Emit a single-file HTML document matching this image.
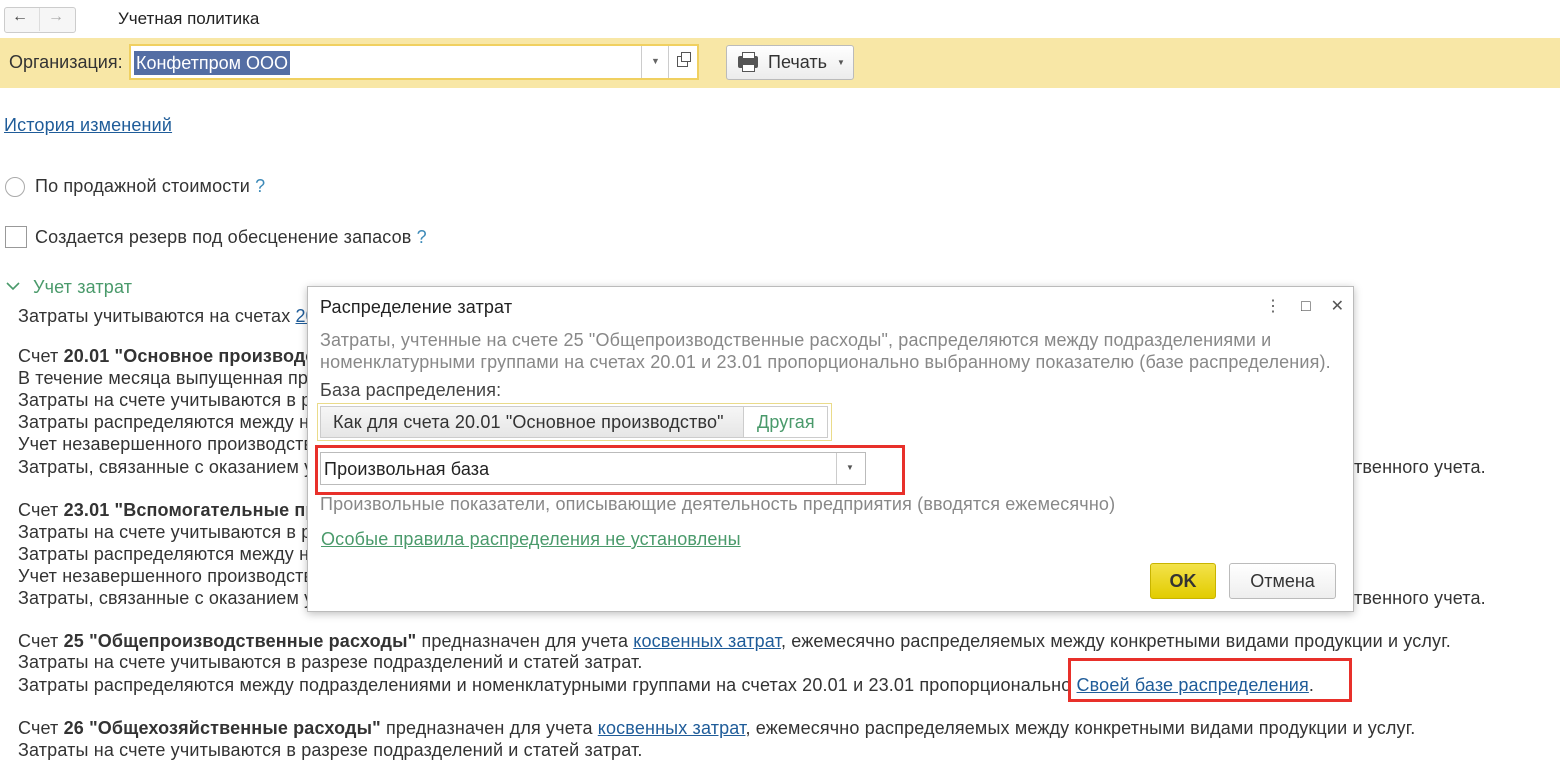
<!DOCTYPE html>
<html><head><meta charset="utf-8"><style>
body{margin:0;width:1560px;height:762px;overflow:hidden;background:#fff;font-family:"Liberation Sans",Arial,sans-serif;color:#333;position:relative}
.l{position:absolute;white-space:nowrap;font-size:18px;line-height:22px;left:18px;letter-spacing:0.15px}
a,.a{color:#1f5c99;text-decoration:underline}
b{font-weight:bold}
.g{color:#4a9a6b}
.q{color:#3d8ab8}
</style></head><body>
<div style="position:absolute;left:4px;top:7px;width:70px;height:24px;border:1px solid #ccc;border-radius:3px;background:#f6f6f6"></div>
<div style="position:absolute;left:39px;top:8px;width:1px;height:23px;background:#ddd"></div>
<div style="position:absolute;left:12px;top:8px;font-size:16px;color:#444">←</div>
<div style="position:absolute;left:48px;top:8px;font-size:16px;color:#aaa">→</div>
<div style="position:absolute;left:118px;top:9px;font-size:17px;color:#222">Учетная политика</div>

<div style="position:absolute;left:0;top:38px;width:1560px;height:50px;background:#f8e7a6"></div>
<div style="position:absolute;left:9px;top:52px;font-size:18px;color:#333">Организация:</div>
<div style="position:absolute;left:129px;top:44px;width:570px;height:36px;border:2px solid #f0d060;background:#fff;box-sizing:border-box"></div>
<div style="position:absolute;left:134px;top:51px;height:24px;background:#546ea4;color:#fff;font-size:18px;line-height:24px;padding:0 2px">Конфетпром ООО</div>
<div style="position:absolute;left:641px;top:46px;width:1px;height:32px;background:#ccc"></div>
<div style="position:absolute;left:668px;top:46px;width:1px;height:32px;background:#ccc"></div>
<div style="position:absolute;left:651px;top:56px;font-size:9px;color:#666">▼</div>
<div style="position:absolute;left:677px;top:56px;width:9px;height:9px;border:1.5px solid #555"></div>
<div style="position:absolute;left:681px;top:52px;width:8px;height:8px;border:1.5px solid #555;background:#fff"></div>
<div style="position:absolute;left:726px;top:45px;width:128px;height:35px;border:1px solid #bbb;border-radius:3px;background:linear-gradient(#fff,#ececec);box-sizing:border-box"></div>
<div style="position:absolute;left:738px;top:56px;width:20px;height:12px;background:#555;border-radius:2px"></div>
<div style="position:absolute;left:742px;top:52px;width:11px;height:5px;background:#fff;border:1.5px solid #555"></div>
<div style="position:absolute;left:742px;top:64px;width:11px;height:6px;background:#fff;border:1.5px solid #555"></div>
<div style="position:absolute;left:768px;top:52px;font-size:18px;color:#333">Печать</div>
<div style="position:absolute;left:837px;top:58px;font-size:8px;color:#555">▼</div>

<div class="l" style="left:4px;top:114px"><a>История изменений</a></div>
<div style="position:absolute;left:5px;top:177px;width:18px;height:18px;border:1px solid #aaa;border-radius:50%"></div>
<div class="l" style="left:35px;top:175px">По продажной стоимости <span class="q">?</span></div>
<div style="position:absolute;left:5px;top:226px;width:20px;height:20px;border:1px solid #999"></div>
<div class="l" style="left:35px;top:226px">Создается резерв под обесценение запасов <span class="q">?</span></div>
<svg style="position:absolute;left:6px;top:281px" width="14" height="10"><path d="M1 2 L7 8 L13 2" fill="none" stroke="#4a9a6b" stroke-width="1.6"/></svg>
<div class="l g" style="left:33px;top:276px">Учет затрат</div>

<div class="l" style="top:305px">Затраты учитываются на счетах <a>20.01</a></div>
<div class="l" style="top:345px">Счет <b>20.01 "Основное производство"</b></div>
<div class="l" style="top:367px">В течение месяца выпущенная продукция</div>
<div class="l" style="top:389px">Затраты на счете учитываются в разрезе</div>
<div class="l" style="top:411px">Затраты распределяются между номенклатурными</div>
<div class="l" style="top:433px">Учет незавершенного производства</div>
<div class="l" style="top:456px">Затраты, связанные с оказанием услуг</div>
<div class="l" style="top:456px;left:1354px">твенного учета.</div>
<div class="l" style="top:499px">Счет <b>23.01 "Вспомогательные производства"</b></div>
<div class="l" style="top:521px">Затраты на счете учитываются в разрезе</div>
<div class="l" style="top:543px">Затраты распределяются между номенклатурными</div>
<div class="l" style="top:565px">Учет незавершенного производства</div>
<div class="l" style="top:587px">Затраты, связанные с оказанием услуг</div>
<div class="l" style="top:587px;left:1354px">твенного учета.</div>
<div class="l" style="top:630px">Счет <b>25 "Общепроизводственные расходы"</b> предназначен для учета <a>косвенных затрат</a>, ежемесячно распределяемых между конкретными видами продукции и услуг.</div>
<div class="l" style="top:651px">Затраты на счете учитываются в разрезе подразделений и статей затрат.</div>
<div class="l" style="top:674px">Затраты распределяются между подразделениями и номенклатурными группами на счетах 20.01 и 23.01 пропорционально <a>Своей базе распределения</a>.</div>
<div class="l" style="top:717px">Счет <b>26 "Общехозяйственные расходы"</b> предназначен для учета <a>косвенных затрат</a>, ежемесячно распределяемых между конкретными видами продукции и услуг.</div>
<div class="l" style="top:739px">Затраты на счете учитываются в разрезе подразделений и статей затрат.</div>
<div style="position:absolute;left:1068px;top:658px;width:284px;height:44px;border:3px solid #e8302a;box-sizing:border-box"></div>

<div style="position:absolute;left:307px;top:286px;width:1047px;height:326px;background:#fff;border:1px solid #bbb;box-shadow:0 2px 8px rgba(0,0,0,.25);box-sizing:border-box"></div>
<div class="l" style="left:320px;top:296px;color:#222">Распределение затрат</div>
<div style="position:absolute;left:1265px;top:296px;font-size:16px;color:#555;letter-spacing:20px">⋮□✕</div>
<div class="l" style="left:320px;top:329px;color:#888">Затраты, учтенные на счете 25 "Общепроизводственные расходы", распределяются между подразделениями и</div>
<div class="l" style="left:320px;top:351px;color:#888">номенклатурными группами на счетах 20.01 и 23.01 пропорционально выбранному показателю (базе распределения).</div>
<div class="l" style="left:320px;top:379px;color:#444">База распределения:</div>
<div style="position:absolute;left:317px;top:403px;width:515px;height:38px;border:1px solid #eadb8a;box-sizing:border-box"></div>
<div style="position:absolute;left:320px;top:406px;width:508px;height:32px;border:1px solid #ccc;background:linear-gradient(#f6f6f6,#e6e6e6);box-sizing:border-box"></div>
<div style="position:absolute;left:743px;top:406px;width:85px;height:32px;background:#fff;border:1px solid #ccc;box-sizing:border-box"></div>
<div class="l" style="left:333px;top:411px;color:#333">Как для счета 20.01 "Основное производство"</div>
<div class="l g" style="left:757px;top:411px">Другая</div>
<div style="position:absolute;left:320px;top:452px;width:546px;height:33px;border:1px solid #bbb;background:#fff;box-sizing:border-box"></div>
<div style="position:absolute;left:836px;top:453px;width:1px;height:31px;background:#ccc"></div>
<div style="position:absolute;left:846px;top:463px;font-size:8px;color:#555">▼</div>
<div class="l" style="left:324px;top:458px;color:#222">Произвольная база</div>
<div style="position:absolute;left:315px;top:445px;width:590px;height:50px;border:3px solid #e8302a;box-sizing:border-box"></div>
<div class="l" style="left:320px;top:493px;color:#888">Произвольные показатели, описывающие деятельность предприятия (вводятся ежемесячно)</div>
<div class="l g" style="left:321px;top:528px;text-decoration:underline">Особые правила распределения не установлены</div>
<div style="position:absolute;left:1150px;top:563px;width:66px;height:36px;background:linear-gradient(#f3e24a,#e2cc00);border:1px solid #c8b400;border-radius:3px;box-sizing:border-box;font-size:18px;font-weight:bold;color:#333;text-align:center;line-height:34px">OK</div>
<div style="position:absolute;left:1229px;top:563px;width:107px;height:36px;background:linear-gradient(#fff,#eee);border:1px solid #bbb;border-radius:3px;box-sizing:border-box;font-size:18px;color:#333;text-align:center;line-height:34px">Отмена</div>
</body></html>
